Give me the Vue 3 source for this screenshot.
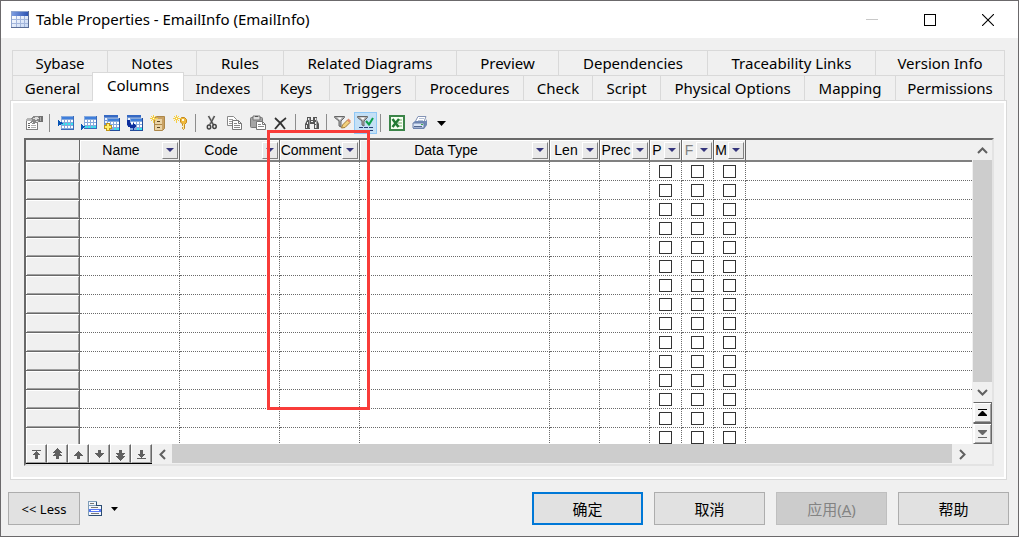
<script setup>
import { ref } from 'vue'

const backTabs = [
  { name: 'Sybase', w: 95 }, { name: 'Notes', w: 89 }, { name: 'Rules', w: 87 },
  { name: 'Related Diagrams', w: 173 }, { name: 'Preview', w: 102 },
  { name: 'Dependencies', w: 149 }, { name: 'Traceability Links', w: 168 },
  { name: 'Version Info', w: 129 }
]
const frontTabs = [
  { name: 'General', w: 80 }, { name: 'Columns', w: 91 }, { name: 'Indexes', w: 79 },
  { name: 'Keys', w: 67 }, { name: 'Triggers', w: 86 }, { name: 'Procedures', w: 108 },
  { name: 'Check', w: 69 }, { name: 'Script', w: 68 }, { name: 'Physical Options', w: 144 },
  { name: 'Mapping', w: 91 }, { name: 'Permissions', w: 109 }
]
const active = ref('Columns')
const fr = (tabs) => ({ gridTemplateColumns: tabs.map((t) => `minmax(0, ${t.w}fr)`).join(' ') })

const columns = [
  { name: 'Name', key: 'c100' }, { name: 'Code', key: 'c100' }, { name: 'Comment', key: 'c80' },
  { name: 'Data Type', key: 'c190' }, { name: 'Len', key: 'c50' }, { name: 'Prec', key: 'c50' },
  { name: 'P', key: 'c32', check: true }, { name: 'F', key: 'c32', check: true, dim: true },
  { name: 'M', key: 'c32', check: true }
]
const rowCount = 15

const navs = [
  { label: 'First', d: 'M3 3h9v1H3zM7 4h1v1h1v1h1v1h1v1H9v4H6V8H4V7h1V6h1V5h1z' },
  { label: 'Page up', d: 'M7 1h1v1h1v1h1v1h1v1h1v1h-2v1h1v1h1v1H9v3H6V9H3V8h1V7h1V6H3V5h1V4h1V3h1V2h1z' },
  { label: 'Up', d: 'M7 4h1v1h1v1h1v1h1v1h1v1H9v3H6V9H3V8h1V7h1V6h1V5h1z' },
  { label: 'Down', d: 'M6 3h3v3h3v1h-1v1h-1v1H9v1H8v1H7v-1H6V9H5V8H4V7H3V6h3z' },
  { label: 'Page down', d: 'M6 3h3v3h3v1h-1v1h-1v1h2v1h-1v1h-1v1H9v1H8v1H7v-1H6v-1H5v-1H4v-1H3V9h2V8H4V7H3V6h3z' },
  { label: 'Last', d: 'M6 3h3v4h2v1h-1v1H9v1H8v1H7v-1H6V9H5V8H4V7h2zM3 11h9v1H3z' }
]
</script>

<template>
  <main class="window">
    <header class="titlebar">
      <svg class="app-icon" width="18" height="17" viewBox="0 0 18 17" shape-rendering="crispEdges">
        <defs>
          <linearGradient id="appHead" x1="0" x2="1" y1="0" y2="0">
            <stop offset="0" stop-color="#7d9de0" /><stop offset="1" stop-color="#2e55b4" />
          </linearGradient>
          <linearGradient id="appCell" x1="0" x2="1" y1="0" y2="1">
            <stop offset="0" stop-color="#ffffff" /><stop offset="1" stop-color="#c4d6f4" />
          </linearGradient>
        </defs>
        <rect width="18" height="17" fill="#5a6d96" />
        <rect width="17" height="16" fill="#8fa5ce" />
        <rect x="1" y="1" width="16" height="4" fill="url(#appHead)" />
        <rect x="1" y="5" width="16" height="11" fill="url(#appCell)" />
        <path d="M1 8h16v1H1zM1 12h16v1H1zM5 5h1v11H5zM9 5h1v11H9zM13 5h1v11h-1z" fill="#a3b6dc" />
      </svg>
      <h1>Table Properties - EmailInfo (EmailInfo)</h1>
      <div class="win-buttons">
        <button type="button" aria-label="Minimize" disabled>
          <svg width="12" height="12" viewBox="0 0 12 12"><path d="M0 5.5h12" stroke="#c8c8c8" /></svg>
        </button>
        <button type="button" aria-label="Maximize">
          <svg width="12" height="12" viewBox="0 0 12 12"><rect x=".5" y=".5" width="11" height="11" fill="none" stroke="#000" /></svg>
        </button>
        <button type="button" aria-label="Close">
          <svg width="12" height="12" viewBox="0 0 12 12"><path d="M0 0l12 12M12 0L0 12" stroke="#000" stroke-width="1.1" /></svg>
        </button>
      </div>
    </header>

    <section class="body">
      <nav class="tabs" role="tablist">
        <div class="tab-row back" :style="fr(backTabs)">
          <button v-for="t in backTabs" :key="t.name" type="button" role="tab" class="tab">{{ t.name }}</button>
        </div>
        <div class="tab-row" :style="fr(frontTabs)">
          <button
            v-for="t in frontTabs" :key="t.name" type="button" role="tab" class="tab"
            :class="{ selected: active === t.name }" :aria-selected="active === t.name"
            @click="active = t.name"
          >{{ t.name }}</button>
        </div>
      </nav>

      <div class="panel">
        <div class="toolbar" role="toolbar" aria-label="Columns">
          <button type="button" aria-label="Properties">
            <svg width="17" height="16" viewBox="0 0 17 16" shape-rendering="crispEdges">
              <path d="M0 5h12v10H0z" fill="#808080" /><path d="M1 6h10v8H1z" fill="#fff" />
              <path d="M1 3h6v3H0V4h1z" fill="#b5b5b5" />
              <path d="M2 8h2v1H2zM2 10h2v1H2zM2 12h2v1H2z" fill="#666" />
              <path d="M5 10h5v1H5zM5 12h5v1H5z" fill="#b0b0b0" />
              <path d="M5 3l3-2h4l1 1h2v5h-3l-1 1H9L8 9H6l1-2-3 1V7l2-2z" fill="#888" />
              <path d="M7 3h2V2h3v1h1v1h-2v1H9V4H7zM10 6h2v1h-2z" fill="#ddd" />
              <path d="M13 1h4v6h-4z" fill="#707070" /><path d="M14 2h1v4h-1z" fill="#aaa" />
            </svg>
          </button>
          <i class="sep"></i>
          <button type="button" aria-label="Insert a row">
            <svg width="16" height="14" viewBox="0 0 16 14" shape-rendering="crispEdges">
              <path d="M3 0h13v14H3z" fill="#3a6bb8" /><path d="M3 0h12v13H3z" fill="#86a9dc" /><path d="M4 1h11v2H4z" fill="#3f7fdc" />
              <path d="M4 4h2v2H4zM7 4h2v2H7zM10 4h2v2h-2zM13 4h2v2h-2zM4 10h2v2H4zM7 10h2v2H7zM10 10h2v2h-2zM13 10h2v2h-2z" fill="#fff" />
              <path d="M4 7h2v2H4zM7 7h2v2H7zM10 7h2v2h-2zM13 7h2v2h-2z" fill="#35e6ee" />
              <path d="M0 4h1v1h1v1h2v1h1v1H3v1H1v1H0z" fill="#0754b5" />
            </svg>
          </button>
          <button type="button" aria-label="Add a row">
            <svg width="16" height="14" viewBox="0 0 16 14" shape-rendering="crispEdges">
              <path d="M3 0h13v13H3z" fill="#3a6bb8" /><path d="M3 0h12v12H3z" fill="#86a9dc" /><path d="M4 1h11v2H4z" fill="#3f7fdc" />
              <path d="M4 4h2v2H4zM7 4h2v2H7zM10 4h2v2h-2zM13 4h2v2h-2zM4 7h2v2H4zM7 7h2v2H7zM10 7h2v2h-2zM13 7h2v2h-2z" fill="#fff" />
              <path d="M4 10h2v2H4zM7 10h2v2H7zM10 10h2v2h-2zM13 10h2v2h-2z" fill="#35e6ee" />
              <path d="M0 8h1v1h1v1h2v1H3v1H2v1H1v1H0z" fill="#0754b5" />
            </svg>
          </button>
          <button type="button" aria-label="Add columns">
            <svg width="16" height="16" viewBox="0 0 16 16" shape-rendering="crispEdges">
              <path d="M0 0h14v11H0z" fill="#6d92d0" /><path d="M0 0h14v2H0z" fill="#3569c4" /><path d="M1 3h2v2H1zM1 6h2v2H1z" fill="#e9f2ff" />
              <path d="M3 3h13v13H3z" fill="#234d9b" /><path d="M3 3h12v12H3z" fill="#86a9dc" /><path d="M4 4h11v2H4z" fill="#3f7fdc" />
              <path d="M4 7h2v2H4zM7 7h2v2H7zM10 7h2v2h-2zM13 7h2v2h-2zM7 10h2v2H7zM10 10h2v2h-2zM13 10h2v2h-2z" fill="#fff" />
              <path d="M10 13h2v2h-2zM13 13h2v2h-2z" fill="#35e6ee" />
              <path d="M2 8h4v2h2v4H6v2H2v-2H0v-4h2z" fill="#c09619" /><path d="M3 9h2v2h2v2H5v2H3v-2H1v-2h2z" fill="#fff06e" />
            </svg>
          </button>
          <button type="button" aria-label="Replicate columns">
            <svg width="16" height="16" viewBox="0 0 16 16" shape-rendering="crispEdges">
              <path d="M0 0h14v11H0z" fill="#6d92d0" /><path d="M0 0h14v2H0z" fill="#3569c4" /><path d="M1 3h2v2H1z" fill="#e9f2ff" />
              <path d="M3 3h13v13H3z" fill="#234d9b" /><path d="M3 3h12v12H3z" fill="#86a9dc" /><path d="M4 4h11v2H4z" fill="#3f7fdc" />
              <path d="M4 7h2v2H4zM7 7h2v2H7zM10 7h2v2h-2zM13 7h2v2h-2zM10 10h2v2h-2zM13 10h2v2h-2z" fill="#fff" />
              <path d="M10 13h2v2h-2zM13 13h2v2h-2z" fill="#35e6ee" />
              <path d="M0 5h3v3h1v2h2V8h1v1h1v1h1v2H8v1H7v2H6v-2H3v-1H1v-2H0z" fill="#0d2f9c" />
            </svg>
          </button>
          <button type="button" aria-label="Create index">
            <svg width="16" height="16" viewBox="0 0 16 16">
              <path d="M4.5 3.5l2-2h8v12l-2 2h-8z" fill="#c9a265" stroke="#ad8748" />
              <path d="M5 4h7v11H5z" fill="#ead3a6" /><path d="M5 9.500h7" stroke="#ad8748" />
              <path d="M7 6.500h3M7 12.500h3" stroke="#5b4520" />
              <path d="M3.500 0v8M0 3.500h8M1 1l5 5M6 1L1 6" stroke="#f6cf45" /><path d="M3 3h1v1H3z" fill="#fff" />
            </svg>
          </button>
          <button type="button" aria-label="Create key">
            <svg width="16" height="16" viewBox="0 0 16 16">
              <path d="M7.500 3.500l1-1h3l2 2v3l-2 2v4l-1 1-1-1v-1l1-1-1-1V9l-2-2z" fill="#f0b93c" stroke="#c48a1f" />
              <path d="M9 4h2v2H9z" fill="#fffbe0" /><path d="M10.500 9v5" stroke="#ffe895" />
              <path d="M3.500 0v8M0 3.500h8M1 1l5 5M6 1L1 6" stroke="#f6cf45" /><path d="M3 3h1v1H3z" fill="#fff" />
            </svg>
          </button>
          <i class="sep"></i>
          <button type="button" aria-label="Cut">
            <svg width="12" height="16" viewBox="0 0 12 16">
              <path d="M2.500 1l5 9M8.500 1l-5 9" stroke="#999" stroke-width="2" />
              <path d="M2.500 1l5 9M8.500 1l-4 8" stroke="#444" />
              <ellipse cx="3" cy="12" rx="1.700" ry="2" fill="none" stroke="#444" stroke-width="1.500" />
              <ellipse cx="8.500" cy="11.500" rx="1.700" ry="2" fill="none" stroke="#444" stroke-width="1.500" />
            </svg>
          </button>
          <button type="button" aria-label="Copy">
            <svg width="16" height="16" viewBox="0 0 16 16">
              <path d="M.5 1.500h6l3 3v6h-9z" fill="#fff" stroke="#888" /><path d="M2 4.500h4M2 6.500h4M2 8.500h3" stroke="#999" />
              <path d="M5.500 5.500h6l3 3v6h-9z" fill="#fff" stroke="#777" /><path d="M11.500 5.500v3h3" fill="none" stroke="#777" />
              <path d="M7 8.500h3M7 10.500h6M7 12.500h6" stroke="#888" />
            </svg>
          </button>
          <button type="button" aria-label="Paste">
            <svg width="16" height="16" viewBox="0 0 16 16">
              <rect x=".5" y="2.500" width="12" height="10" rx="1" fill="#a5a5a5" stroke="#777" />
              <path d="M3 1h7v4H3z" fill="#ddd" stroke="#777" /><path d="M5 1.500h3" stroke="#555" />
              <path d="M6.500 6.500h6l3 3v5h-9z" fill="#fff" stroke="#777" /><path d="M12.500 6.500v3h3" fill="none" stroke="#777" />
              <path d="M8 9.500h3M8 11.500h6" stroke="#888" />
            </svg>
          </button>
          <button type="button" aria-label="Delete">
            <svg width="13" height="13" viewBox="0 0 13 13"><path d="M1 1q6 5 10 11M12 1Q6 5 1 12" fill="none" stroke="#333" stroke-width="1.800" /></svg>
          </button>
          <i class="sep"></i>
          <button type="button" aria-label="Find">
            <svg width="16" height="16" viewBox="0 0 16 16">
              <path d="M3 2h4v3h2V2h4v3l2 4v5h-5V9H6v5H1V9l2-4z" fill="#555" />
              <path d="M4 3h1v2H4zM11 3h1v2h-1zM3 7h1v2H3zM11 7h1v2h-1zM2 10h1v3H2zM11 10h1v3h-1zM7 6h2v1H7z" fill="#eee" />
              <path d="M5 3h1v10H5zM12 3h1v10h-1z" fill="#999" />
            </svg>
          </button>
          <i class="sep"></i>
          <button type="button" aria-label="Customize filter">
            <svg width="17" height="17" viewBox="0 0 17 17">
              <path d="M.5 1.500h10v1L7 6v6l-2-1V6L.5 2.500z" fill="#aaa" stroke="#666" /><path d="M3 2.500h5L6 5z" fill="#fff" />
              <path d="M7.500 13l1-3 5-5 2.500 2.500-5 5z" fill="#f4d07a" stroke="#a07a35" /><path d="M13 5l1.500-1.500L17 6l-1.500 1.500z" fill="#e38a6c" />
              <path d="M3 15h1v1H3zM6 15h1v1H6zM9 15h1v1H9z" fill="#333" />
            </svg>
          </button>
          <button type="button" class="on" aria-label="Enable filter" aria-pressed="true">
            <svg width="17" height="17" viewBox="0 0 17 17">
              <path d="M.5 1.500h10v1L7 6v5l-2-1V6L.5 2.500z" fill="#aaa" stroke="#666" /><path d="M3 2.500h5L6 5z" fill="#fff" />
              <path d="M9 6l3 3.500L16 3" fill="none" stroke="#0ca04a" stroke-width="2" />
              <path d="M2 12h4v1H2zM7 12h4v1H7zM12 12h4v1h-4zM2 15h4v1H2zM7 15h4v1H7zM12 15h4v1h-4z" fill="#263e75" />
            </svg>
          </button>
          <i class="sep"></i>
          <button type="button" aria-label="Export to Excel">
            <svg width="16" height="16" viewBox="0 0 16 16">
              <path d="M0 0h16v16H0z" fill="#3c8549" /><path d="M2 2h12v12H2z" fill="#f5fff1" />
              <path d="M9 4h4v8H9z" fill="#b6d6ae" /><path d="M9 6.500h4M9 9.500h4" stroke="#fff" />
              <path d="M3.500 4l6 8M10 4l-6.500 8" stroke="#227b34" stroke-width="2.500" />
            </svg>
          </button>
          <button type="button" aria-label="Print">
            <svg width="16" height="16" viewBox="0 0 16 16">
              <path d="M6 1.500h8L11.500 8h-9z" fill="#fff" stroke="#8494b5" /><path d="M7 3.500h5M6 5.500h5" stroke="#b6c1d6" />
              <path d="M1 8l2-2h11l1-2v6l-3 4H1z" fill="#7089b5" /><path d="M1 8h11v5H1z" fill="#d9e4f5" stroke="#6b7fa8" />
              <path d="M2 11.500h8" stroke="#53678e" /><path d="M9 9h2v1H9z" fill="#3eae4b" />
            </svg>
          </button>
          <button type="button" class="drop" aria-label="Print options">
            <svg width="9" height="5" viewBox="0 0 9 5"><path d="M0 0h9L4.500 5z" /></svg>
          </button>
        </div>

        <div class="grid-box">
          <div class="viewport">
            <table>
              <colgroup>
                <col class="c54"><col v-for="c in columns" :key="c.name" :class="c.key"><col>
              </colgroup>
              <thead>
                <tr>
                  <th class="corner"></th>
                  <th v-for="c in columns" :key="c.name" scope="col">
                    <div class="head">
                      <span :class="{ dim: c.dim }">{{ c.name }}</span>
                      <button type="button" :aria-label="`Sort by ${c.name}`">
                        <svg width="8" height="4" viewBox="0 0 8 4"><path d="M0 0h8L4 4z" fill="#35357c" /></svg>
                      </button>
                    </div>
                  </th>
                  <th class="rest"></th>
                </tr>
              </thead>
              <tbody>
                <tr v-for="r in rowCount" :key="r">
                  <th scope="row" :aria-label="`Row ${r}`"></th>
                  <td v-for="c in columns" :key="c.name">
                    <input v-if="c.check" type="checkbox" :aria-label="`${c.name}, row ${r}`">
                  </td>
                  <td class="rest"></td>
                </tr>
              </tbody>
            </table>
          </div>

          <div class="vbar">
            <button type="button" class="arrow" aria-label="Scroll up">
              <svg width="11" height="7" viewBox="0 0 11 7"><path d="M1 6l4.500-4.500L10 6" /></svg>
            </button>
            <div class="thumb"></div>
            <button type="button" class="arrow" aria-label="Scroll down">
              <svg width="11" height="7" viewBox="0 0 11 7"><path d="M1 1l4.500 4.500L10 1" /></svg>
            </button>
            <button type="button" class="raised" aria-label="Top">
              <svg width="9" height="8" viewBox="0 0 9 8"><path d="M0 0h9v1H0zM4 2h1l4 4v1H0V6z" fill="#000" /></svg>
            </button>
            <button type="button" class="raised" aria-label="Bottom">
              <svg width="9" height="8" viewBox="0 0 9 8"><path d="M0 0h9v1L5 5H4L0 1zM0 7h9v1H0z" fill="#686868" /></svg>
            </button>
          </div>

          <div class="hbar">
            <div class="navs">
              <button v-for="n in navs" :key="n.label" type="button" :aria-label="n.label">
                <svg width="15" height="14" viewBox="0 0 15 14" shape-rendering="crispEdges"><path :d="n.d" fill="#606060" /></svg>
              </button>
            </div>
            <button type="button" class="arrow" aria-label="Scroll left">
              <svg width="7" height="11" viewBox="0 0 7 11"><path d="M6 1L1.500 5.500 6 10" /></svg>
            </button>
            <div class="thumb"></div>
            <button type="button" class="arrow" aria-label="Scroll right">
              <svg width="7" height="11" viewBox="0 0 7 11"><path d="M1 1l4.500 4.500L1 10" /></svg>
            </button>
          </div>
          <div class="highlight"></div>
        </div>
      </div>
    </section>

    <footer class="footer">
      <button type="button" class="btn less">&lt;&lt; Less</button>
      <button type="button" class="menu" aria-label="Menu">
        <svg width="14" height="15" viewBox="0 0 14 15" shape-rendering="crispEdges">
          <path d="M0 0h9v4h5v11H0z" fill="#7f9db9" /><path d="M8 1h1v3h5v11H1v-1h12V5H8z" fill="#2c4d73" />
          <path d="M1 1h7v3H1zM1 5h12v9H1z" fill="#f3f7fb" /><path d="M2 2h4v1H2zM3 6h7v1H3zM3 12h8v1H3z" fill="#777" />
          <path d="M1 8h12v3H1z" fill="#5778f5" /><path d="M3 9h8v1H3z" fill="#fff" />
        </svg>
        <svg width="7" height="4" viewBox="0 0 7 4"><path d="M0 0h7L3.500 4z" /></svg>
      </button>
      <div class="actions">
        <button type="button" class="btn primary">确定</button>
        <button type="button" class="btn">取消</button>
        <button type="button" class="btn" disabled>应用(<u>A</u>)</button>
        <button type="button" class="btn">帮助</button>
      </div>
    </footer>
  </main>
</template>

<style>
body { margin: 0; }
</style>

<style scoped>
* { box-sizing: border-box; }
button { margin: 0; padding: 0; border: 0; background: none; font: inherit; color: inherit; }
svg { display: block; flex: none; }
.window {
  display: flex; flex-direction: column; height: 100vh; overflow: hidden;
  border: 1px solid #6b696b; background: #f0f0f0; color: #000;
  font: 15px/20px "Noto Sans", "Noto Sans CJK SC", sans-serif;
}
.titlebar { display: flex; align-items: center; flex: none; height: 37px; padding-left: 10px; background: #fff; }
.titlebar h1 { flex: 1; margin: 0 0 2px 7px; font-size: 15px; font-weight: 400; }
.win-buttons { display: flex; padding-right: 1px; }
.win-buttons button { display: grid; place-items: center; width: 58px; height: 37px; }

.body { display: flex; flex-direction: column; flex: 1; min-height: 0; padding: 12px 11px 0 9px; }
.tabs { padding: 0 2px; }
.tab-row { display: grid; height: 25px; border-left: 1px solid #d9d9d9; }
.tab { border: solid #d9d9d9; border-width: 1px 1px 0 0; white-space: nowrap; text-align: center; }
.tab.selected { position: relative; z-index: 1; margin: -3px 0 -1px -1px; padding-bottom: 4px; border-left-width: 1px; background: #fff; }
.panel {
  display: flex; flex-direction: column; flex: 1; min-height: 0;
  padding: 11px 12px 13px 12px; border: 1px solid #d9d9d9; box-shadow: inset 0 0 0 2px #fff;
}
.toolbar { display: flex; align-items: center; flex: none; height: 22px; margin-bottom: 4px; }
.toolbar button { display: grid; place-items: center; width: 23px; height: 22px; }
.toolbar .on { border: 1px solid #90c8f6; background: #c4e0f6; }
.toolbar .drop { width: 20px; }
.sep { width: 1px; height: 18px; margin: 0 4px 0 3px; background: #8d8d8d; }

.grid-box {
  position: relative; display: grid; flex: 1; min-height: 0; margin-left: 1px;
  grid-template: minmax(0, 1fr) 20px / minmax(0, 1fr) 20px;
  border: 2px solid; border-color: #696969 #e3e3e3 #e3e3e3 #696969;
}
.viewport { overflow: hidden; background: #fff; }
table { width: 100%; border-collapse: separate; border-spacing: 0; table-layout: fixed; }
.c54 { width: 54px; } .c100 { width: 100px; } .c80 { width: 80px; } .c190 { width: 190px; }
.c50 { width: 50px; } .c32 { width: 32px; }
th, td { padding: 0; }
thead th { height: 22px; border: solid #696969; border-width: 0 1px 2px 0; border-bottom-color: #808080; background: #f0f0f0; font: 14px/16px "Liberation Sans", Arial, sans-serif; }
.head { display: flex; align-items: center; height: 20px; box-shadow: inset 1px 1px #fff; }
.head span { flex: 1; min-width: 0; overflow: hidden; white-space: nowrap; text-align: center; }
.head .dim { color: #808080; }
.head button { display: grid; place-items: center; flex: none; width: 16px; height: 17px; margin-right: 1px; border: 1px solid; border-color: #fff #808080 #808080 #fff; background: #e9e9e9; }
tbody th { height: 19px; border: solid #696969; border-width: 0 1px 1px 0; background: #f0f0f0; box-shadow: inset 1px 1px #fff, inset -1px -1px #a0a0a0; }
td { height: 19px; border: dotted #696969; border-width: 0 1px 1px 0; text-align: center; line-height: 0; }
td.rest, thead th.rest { border-right: 0; }
td input { width: 13px; height: 13px; margin: 0; border: 1px solid #333; background: #fff; appearance: none; vertical-align: middle; }
td input:checked { background: #333; }

.arrow { display: grid; place-items: center; flex: none; }
.arrow path { fill: none; stroke: #606060; stroke-width: 2; }
.thumb { flex: 1; background: #cdcdcd; }
.vbar { display: flex; flex-direction: column; padding-left: 1px; background: #f0f0f0; }
.vbar .arrow { height: 20px; }
.raised { display: grid; place-items: center; flex: none; height: 21px; border: 1px solid; border-color: #696969 #696969 #696969 #fff; box-shadow: inset 1px 1px #fff, inset -1px -1px #a0a0a0; }
.hbar { display: flex; grid-column: 1 / -1; padding-right: 20px; background: #f0f0f0; }
.hbar .arrow { width: 20px; }
.hbar .thumb { margin-bottom: 1px; }
.navs { display: flex; border-bottom: 1px solid #000; }
.navs button { display: grid; place-items: center; width: 21px; border: 1px solid; border-color: #fff #696969 #a0a0a0 #fff; box-shadow: inset -1px 0 #a0a0a0; }
.highlight { position: absolute; left: 241px; top: -10px; width: 103px; height: 280px; border: 3px solid #f93c39; pointer-events: none; }

.footer { display: flex; align-items: center; flex: none; padding: 12px 9px 11px 7px; }
.btn { width: 111px; height: 33px; border: 1px solid #adadad; background: #e1e1e1; white-space: nowrap; }
.btn.primary { border: 2px solid #0078d7; }
.btn:disabled { border-color: #bfbfbf; background: #ccc; color: #838383; }
.btn.less { width: 72px; font-size: 13px; }
.menu { display: flex; align-items: center; gap: 9px; margin-left: 8px; }
.actions { display: flex; gap: 11px; margin-left: auto; }
</style>
